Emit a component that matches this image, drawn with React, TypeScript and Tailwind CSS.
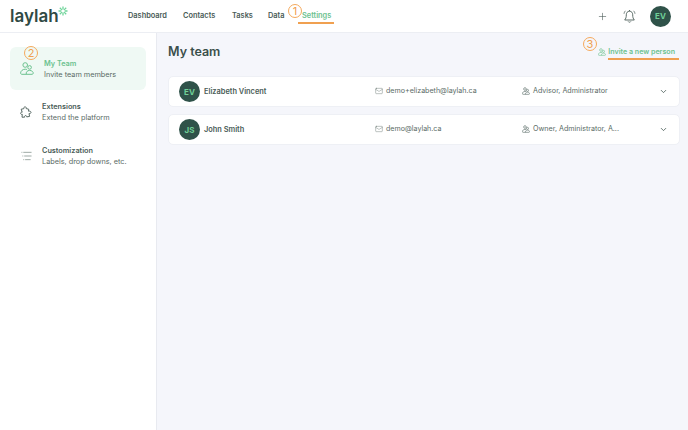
import { Plus, Mail, ChevronDown } from 'lucide-react'

const MEMBERS = [
  { initials: 'EV', name: 'Elizabeth Vincent', email: 'demo+elizabeth@laylah.ca', roles: 'Advisor, Administrator' },
  { initials: 'JS', name: 'John Smith', email: 'demo@laylah.ca', roles: 'Owner, Administrator, A...' },
]

function Marker({ n, className }: { n: number; className: string }) {
  return (
    <span className={`absolute w-[14px] h-[14px] rounded-full border border-[#f5a95c] text-[#f0a050] text-[11px] leading-[12px] text-center ${className}`}>
      {n}
    </span>
  )
}

function Avatar({ initials }: { initials: string }) {
  return (
    <div className="w-[21px] h-[21px] rounded-full bg-[#2f5249] flex items-center justify-center shrink-0 text-[8px] font-bold text-[#6fcf97]">
      {initials}
    </div>
  )
}

// two overlapping people, the back one taller
function TeamIcon({ className, strokeWidth = 1 }: { className: string; strokeWidth?: number }) {
  return (
    <svg className={className} viewBox="0 0 14 13" fill="none" stroke="currentColor" strokeWidth={strokeWidth}>
      <circle cx="5.2" cy="3" r="2.3" />
      <circle cx="9.6" cy="5.4" r="1.8" />
      <path d="M6.5 12.3H1.9C1 12.3.5 11.7.6 10.9C.8 9 2.6 7.2 5.2 7.2C5.9 7.2 6.5 7.3 7 7.6" />
      <path d="M6.3 12.3C5.7 10.2 7.3 8.4 9.6 8.4C11.9 8.4 13.6 10.2 13.2 11.4C13.1 12 12.6 12.3 12 12.3Z" />
    </svg>
  )
}

function BellIcon({ className }: { className: string }) {
  return (
    <svg className={className} viewBox="0 0 14 15" fill="none" stroke="currentColor" strokeWidth="0.9">
      <path d="M7 2.2C4.9 2.2 3.8 3.8 3.8 5.8C3.8 8.4 3.3 9.6 2.2 11H11.8C10.7 9.6 10.2 8.4 10.2 5.8C10.2 3.8 9.1 2.2 7 2.2Z" />
      <path d="M5.7 12.5C6 13.4 8 13.4 8.3 12.5M7 1V2.2" />
      <path d="M2.9 1.8C2.1 2.6 1.6 3.6 1.5 4.8M11.1 1.8C11.9 2.6 12.4 3.6 12.5 4.8" strokeWidth="0.7" />
    </svg>
  )
}

function PuzzleIcon({ className }: { className: string }) {
  return (
    <svg className={className} viewBox="0 0 12 12" fill="none" stroke="currentColor" strokeWidth="0.9" strokeLinejoin="round">
      <path d="M1.2 3.2L3.8 2.7C3.7 1.4 4.4.7 5.2.8C6 .9 6.4 1.6 6.2 2.6L8.7 3.2L8.5 5.2C9.8 4.9 10.9 5.4 11 6.3C11.1 7.2 10.1 7.8 9 7.6L9.6 10.4L6.7 10.9C6.8 10 6.2 9.5 5.4 9.6C4.7 9.7 4.3 10.4 4.6 11.2L2 11.2L2.3 8.4C1.4 8.6.6 8.1.6 7.3C.6 6.5 1.4 6 2.2 6.2Z" />
    </svg>
  )
}

function LinesIcon({ className }: { className: string }) {
  return (
    <svg className={className} viewBox="0 0 12 10" fill="none" stroke="currentColor" strokeWidth="0.8">
      <path d="M2.5 1H11.5M.5 1H1.5M3.5 5H11.5M1.5 5H2.5M4.5 9H10.5M2.5 9H3.5" />
    </svg>
  )
}

export default function App() {
  return (
    <div className="relative w-[688px] h-[430px] overflow-hidden bg-white text-[#4a5c57] flex flex-col font-['Inter','Noto_Sans',sans-serif]">
      {/* top bar */}
      <header className="relative h-[33px] shrink-0 flex items-center border-b border-[#eceef3] bg-white">
        <div className="relative ml-[10px] w-[118px] pt-[1px] text-[17px] font-semibold leading-none text-[#2f4a44]">
          laylah
          <svg className="absolute left-[48px] -top-[1px] w-[10px] h-[10px]" viewBox="0 0 10 10" stroke="#6fd49a" strokeWidth="1.3" fill="none">
            <path d="M5 0.5V3.4M5 6.6V9.5M0.5 5H3.4M6.6 5H9.5M1.8 1.8L3.9 3.9M6.1 6.1L8.2 8.2M8.2 1.8L6.1 3.9M3.9 6.1L1.8 8.2" />
          </svg>
        </div>
        <nav className="flex items-center text-[7.4px] font-semibold text-[#4a5c57]">
          <span className="w-[55px]">Dashboard</span>
          <span className="w-[49px]">Contacts</span>
          <span className="w-[36px]">Tasks</span>
          <span className="w-[34px]">Data</span>
          <span className="relative text-[#6cc28f]">
            Settings
            <span className="absolute -left-[4px] -right-[3px] top-[12px] h-[1.5px] bg-[#f0a050]" />
          </span>
        </nav>
        <Marker n={1} className="left-[288px] top-[4px]" />
        <div className="ml-auto flex items-center">
          <Plus size={11} strokeWidth={1.3} className="text-[#4a5c57] mr-[14px]" />
          <BellIcon className="w-[15px] h-[15px] text-[#4a5c57] mr-[13px]" />
          <div className="mr-[17px]">
            <Avatar initials="EV" />
          </div>
        </div>
      </header>

      <div className="flex flex-1 min-h-0">
        {/* sidebar */}
        <aside className="relative w-[157px] shrink-0 border-r border-[#e8eaf0] bg-white pt-[14px] pl-[10px] pr-[10px]">
          <div className="h-[43px] rounded-[6px] bg-[#eff9f4] flex items-center pl-[10px]">
            <TeamIcon className="w-[14px] h-[13px] text-[#6cc28f] mr-[10px]" />
            <div className="text-[7.3px] leading-[11px]">
              <div className="font-semibold text-[#6cc28f]">My Team</div>
              <div className="text-[#5a6b66]">Invite team members</div>
            </div>
          </div>
          <Marker n={2} className="left-[24px] top-[13px]" />
          <div className="h-[44px] flex items-center pl-[10px]">
            <PuzzleIcon className="w-[12px] h-[12px] text-[#4a5c57] mr-[10px]" />
            <div className="text-[7.3px] leading-[11px]">
              <div className="font-semibold text-[#4a5c57]">Extensions</div>
              <div className="text-[#5a6b66]">Extend the platform</div>
            </div>
          </div>
          <div className="h-[43px] flex items-center pl-[11px]">
            <LinesIcon className="w-[11px] h-[10px] text-[#7a8a85] mr-[10px]" />
            <div className="text-[7.3px] leading-[11px]">
              <div className="font-semibold text-[#4a5c57]">Customization</div>
              <div className="text-[#5a6b66]">Labels, drop downs, etc.</div>
            </div>
          </div>
        </aside>

        {/* main */}
        <main className="relative flex-1 bg-[#f5f6fb] pl-[11px] pr-[8px] pt-[10px]">
          <div className="flex items-center justify-between h-[18px] mb-[15px]">
            <h1 className="text-[12.5px] font-semibold text-[#3a4f4a] leading-none">My team</h1>
            <div className="relative flex items-center gap-[2px] pr-[5px] text-[7.1px] font-semibold text-[#6cc28f]">
              <TeamIcon className="w-[8px] h-[8px]" strokeWidth={1.1} />
              Invite a new person
              <span className="absolute left-[10px] right-[1px] top-[11px] h-[2px] bg-[#f0a050]" />
            </div>
          </div>
          <Marker n={3} className="left-[426px] top-[4px]" />
          <div className="flex flex-col gap-[7px]">
            {MEMBERS.map(m => (
              <div key={m.name} className="h-[31px] rounded-[5px] bg-white border border-[#eef0f5] flex items-center pl-[10px] pr-[11px]">
                <Avatar initials={m.initials} />
                <div className="w-[171px] ml-[4px] text-[7.4px] font-semibold text-[#4a5c57]">{m.name}</div>
                <div className="w-[147px] flex items-center gap-[3px] text-[7.1px] text-[#5a6b66]">
                  <Mail size={8} strokeWidth={1.2} />
                  {m.email}
                </div>
                <div className="flex-1 flex items-center gap-[3px] text-[7.15px] text-[#5a6b66]">
                  <TeamIcon className="w-[8px] h-[8px]" strokeWidth={1.1} />
                  {m.roles}
                </div>
                <ChevronDown size={9} strokeWidth={2} className="text-[#3a4f4a]" />
              </div>
            ))}
          </div>
        </main>
      </div>
    </div>
  )
}
